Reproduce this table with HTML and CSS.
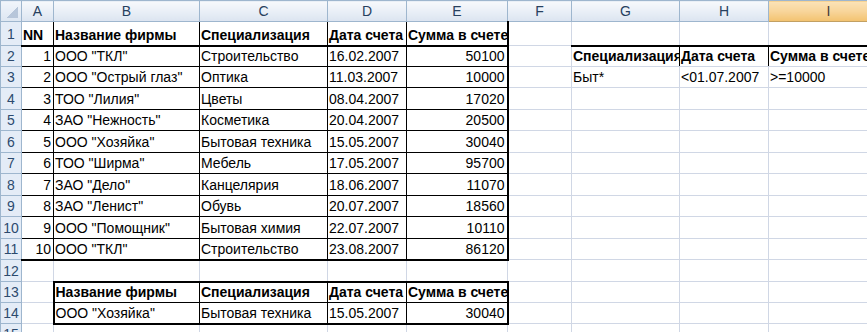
FILE: index.html
```html
<!DOCTYPE html>
<html lang="ru">
<head>
<meta charset="utf-8">
<title>Excel</title>
<link rel="stylesheet" href="styles.css">
</head>
<body>
<table class="sheet">
  <colgroup>
    <col class="w-hdr"><col class="w-a"><col class="w-b"><col class="w-c"><col class="w-d"><col class="w-e"><col class="w-f"><col class="w-g"><col class="w-h"><col class="w-i">
  </colgroup>
  <tr class="r-head">
    <th class="corner"></th><th class="ch">A</th><th class="ch">B</th><th class="ch">C</th><th class="ch">D</th><th class="ch">E</th><th class="ch">F</th><th class="ch">G</th><th class="ch">H</th><th class="ch sel">I</th>
  </tr>
  <tr class="r-1">
    <th class="rh">1</th>
    <td class="bd b bot2">NN</td><td class="bd b bot2">Название фирмы</td><td class="bd b bot2">Специализация</td><td class="bd b bot2 nowrap">Дата счета</td><td class="bd b bot2 right2 nowrap">Сумма в счете</td>
    <td></td><td></td><td></td><td></td>
  </tr>
  <tr class="r-21">
    <th class="rh">2</th>
    <td class="bd num">1</td><td class="bd">ООО "ТКЛ"</td><td class="bd">Строительство</td><td class="bd">16.02.2007</td><td class="bd num right2">50100</td>
    <td></td><td class="b crit top2 clip">Специализация</td><td class="b crit top2">Дата счета</td><td class="b crit top2 clip">Сумма в счете</td>
  </tr>
  <tr class="r-21">
    <th class="rh">3</th>
    <td class="bd num">2</td><td class="bd">ООО "Острый глаз"</td><td class="bd">Оптика</td><td class="bd">11.03.2007</td><td class="bd num right2">10000</td>
    <td></td><td>Быт*</td><td>&lt;01.07.2007</td><td>&gt;=10000</td>
  </tr>
  <tr class="r-22">
    <th class="rh">4</th>
    <td class="bd num">3</td><td class="bd">ТОО "Лилия"</td><td class="bd">Цветы</td><td class="bd">08.04.2007</td><td class="bd num right2">17020</td>
    <td></td><td></td><td></td><td></td>
  </tr>
  <tr class="r-21">
    <th class="rh">5</th>
    <td class="bd num">4</td><td class="bd">ЗАО "Нежность"</td><td class="bd">Косметика</td><td class="bd">20.04.2007</td><td class="bd num right2">20500</td>
    <td></td><td></td><td></td><td></td>
  </tr>
  <tr class="r-22">
    <th class="rh">6</th>
    <td class="bd num">5</td><td class="bd">ООО "Хозяйка"</td><td class="bd">Бытовая техника</td><td class="bd">15.05.2007</td><td class="bd num right2">30040</td>
    <td></td><td></td><td></td><td></td>
  </tr>
  <tr class="r-21">
    <th class="rh">7</th>
    <td class="bd num">6</td><td class="bd">ТОО "Ширма"</td><td class="bd">Мебель</td><td class="bd">17.05.2007</td><td class="bd num right2">95700</td>
    <td></td><td></td><td></td><td></td>
  </tr>
  <tr class="r-22">
    <th class="rh">8</th>
    <td class="bd num">7</td><td class="bd">ЗАО "Дело"</td><td class="bd">Канцелярия</td><td class="bd">18.06.2007</td><td class="bd num right2">11070</td>
    <td></td><td></td><td></td><td></td>
  </tr>
  <tr class="r-21">
    <th class="rh">9</th>
    <td class="bd num">8</td><td class="bd">ЗАО "Ленист"</td><td class="bd">Обувь</td><td class="bd">20.07.2007</td><td class="bd num right2">18560</td>
    <td></td><td></td><td></td><td></td>
  </tr>
  <tr class="r-22">
    <th class="rh">10</th>
    <td class="bd num">9</td><td class="bd">ООО "Помощник"</td><td class="bd">Бытовая химия</td><td class="bd">22.07.2007</td><td class="bd num right2">10110</td>
    <td></td><td></td><td></td><td></td>
  </tr>
  <tr class="r-21">
    <th class="rh">11</th>
    <td class="bd num bot2">10</td><td class="bd bot2">ООО "ТКЛ"</td><td class="bd bot2">Строительство</td><td class="bd bot2">23.08.2007</td><td class="bd num bot2 right2">86120</td>
    <td></td><td></td><td></td><td></td>
  </tr>
  <tr class="r-22">
    <th class="rh">12</th>
    <td></td><td></td><td></td><td></td><td></td><td></td><td></td><td></td><td></td>
  </tr>
  <tr class="r-21">
    <th class="rh">13</th>
    <td></td><td class="bd b top2 left2">Название фирмы</td><td class="bd b top2">Специализация</td><td class="bd b top2 nowrap">Дата счета</td><td class="bd b top2 right2 nowrap">Сумма в счете</td>
    <td></td><td></td><td></td><td></td>
  </tr>
  <tr class="r-21">
    <th class="rh">14</th>
    <td></td><td class="bd bot2 left2">ООО "Хозяйка"</td><td class="bd bot2">Бытовая техника</td><td class="bd bot2">15.05.2007</td><td class="bd num bot2 right2">30040</td>
    <td></td><td></td><td></td><td></td>
  </tr>
  <tr class="r-21">
    <th class="rh">15</th>
    <td></td><td></td><td></td><td></td><td></td><td></td><td></td><td></td><td></td>
  </tr>
</table>
</body>
</html>
```

FILE: styles.css
```css
html, body {
  margin: 0;
  padding: 0;
  background: #ffffff;
  overflow: hidden;
}

.sheet {
  border-collapse: collapse;
  table-layout: fixed;
  width: 888px;
  font-family: "Liberation Sans", Arial, sans-serif;
  font-size: 14px;
  color: #000000;
}

.w-hdr { width: 21px; }
.w-a { width: 32px; }
.w-b { width: 146px; }
.w-c { width: 128px; }
.w-d { width: 79px; }
.w-e { width: 101px; }
.w-f { width: 64px; }
.w-g { width: 108px; }
.w-h { width: 89px; }
.w-i { width: 120px; }

.sheet td {
  border: 1px solid #d0d7e5;
  padding: 0 2px 1px 1px;
  vertical-align: bottom;
  white-space: nowrap;
  overflow: hidden;
  line-height: 17px;
}

.r-head { height: 21px; }
.r-1 { height: 24px; }
.r-21 { height: 21px; }
.r-22 { height: 22px; }

.sheet th {
  font-weight: normal;
  padding: 0;
  border: 1px solid #9eb6ce;
}

.corner {
  background:
    linear-gradient(135deg, transparent 55%, #b7c6da 55%) no-repeat right 3px bottom 3px / 13px 13px,
    linear-gradient(#f1f5fb, #dde6f2);
  border-color: #9eb6ce;
}

.ch {
  background: linear-gradient(#f7f9fc 0%, #e8eef6 55%, #dbe4f0 100%);
  color: #27405e;
  text-align: center;
  vertical-align: middle;
  font-size: 14px;
  border-left: 1px solid #c5d2e2;
  border-right: 1px solid #c5d2e2;
  border-top: 1px solid #d5deea;
  border-bottom: 1px solid #9eb6ce;
}

.ch.sel {
  background: linear-gradient(#fbe3b8 0%, #f8d59a 50%, #f3c26f 100%);
  color: #3b3b3b;
  border-bottom: 1px solid #c2a063;
  border-left-color: #d9b06c;
}

.rh {
  background: #e4ecf7;
  color: #2c4a6e;
  text-align: center;
  vertical-align: middle;
  font-size: 14px;
  border-left: none;
  border-right: 1px solid #9eb6ce;
  border-top: 1px solid #c5d2e2;
  border-bottom: 1px solid #c5d2e2;
}

.sheet td.bd { border: 1px solid #000000; }
.sheet td.crit { border-left: 1px solid #000000; border-right: 1px solid #000000; }
.sheet td.top2 { border-top: 2px solid #000000; }
.sheet td.bot2 { border-bottom: 2px solid #000000; }
.sheet td.right2 { border-right: 2px solid #000000; }
.sheet td.left2 { border-left: 2px solid #000000; }

.b { font-weight: bold; }
.num { text-align: right; }
.clip { text-overflow: clip; }
.nowrap { white-space: nowrap; }
.sheet td.b { padding-left: 1px; padding-right: 0; }
```
